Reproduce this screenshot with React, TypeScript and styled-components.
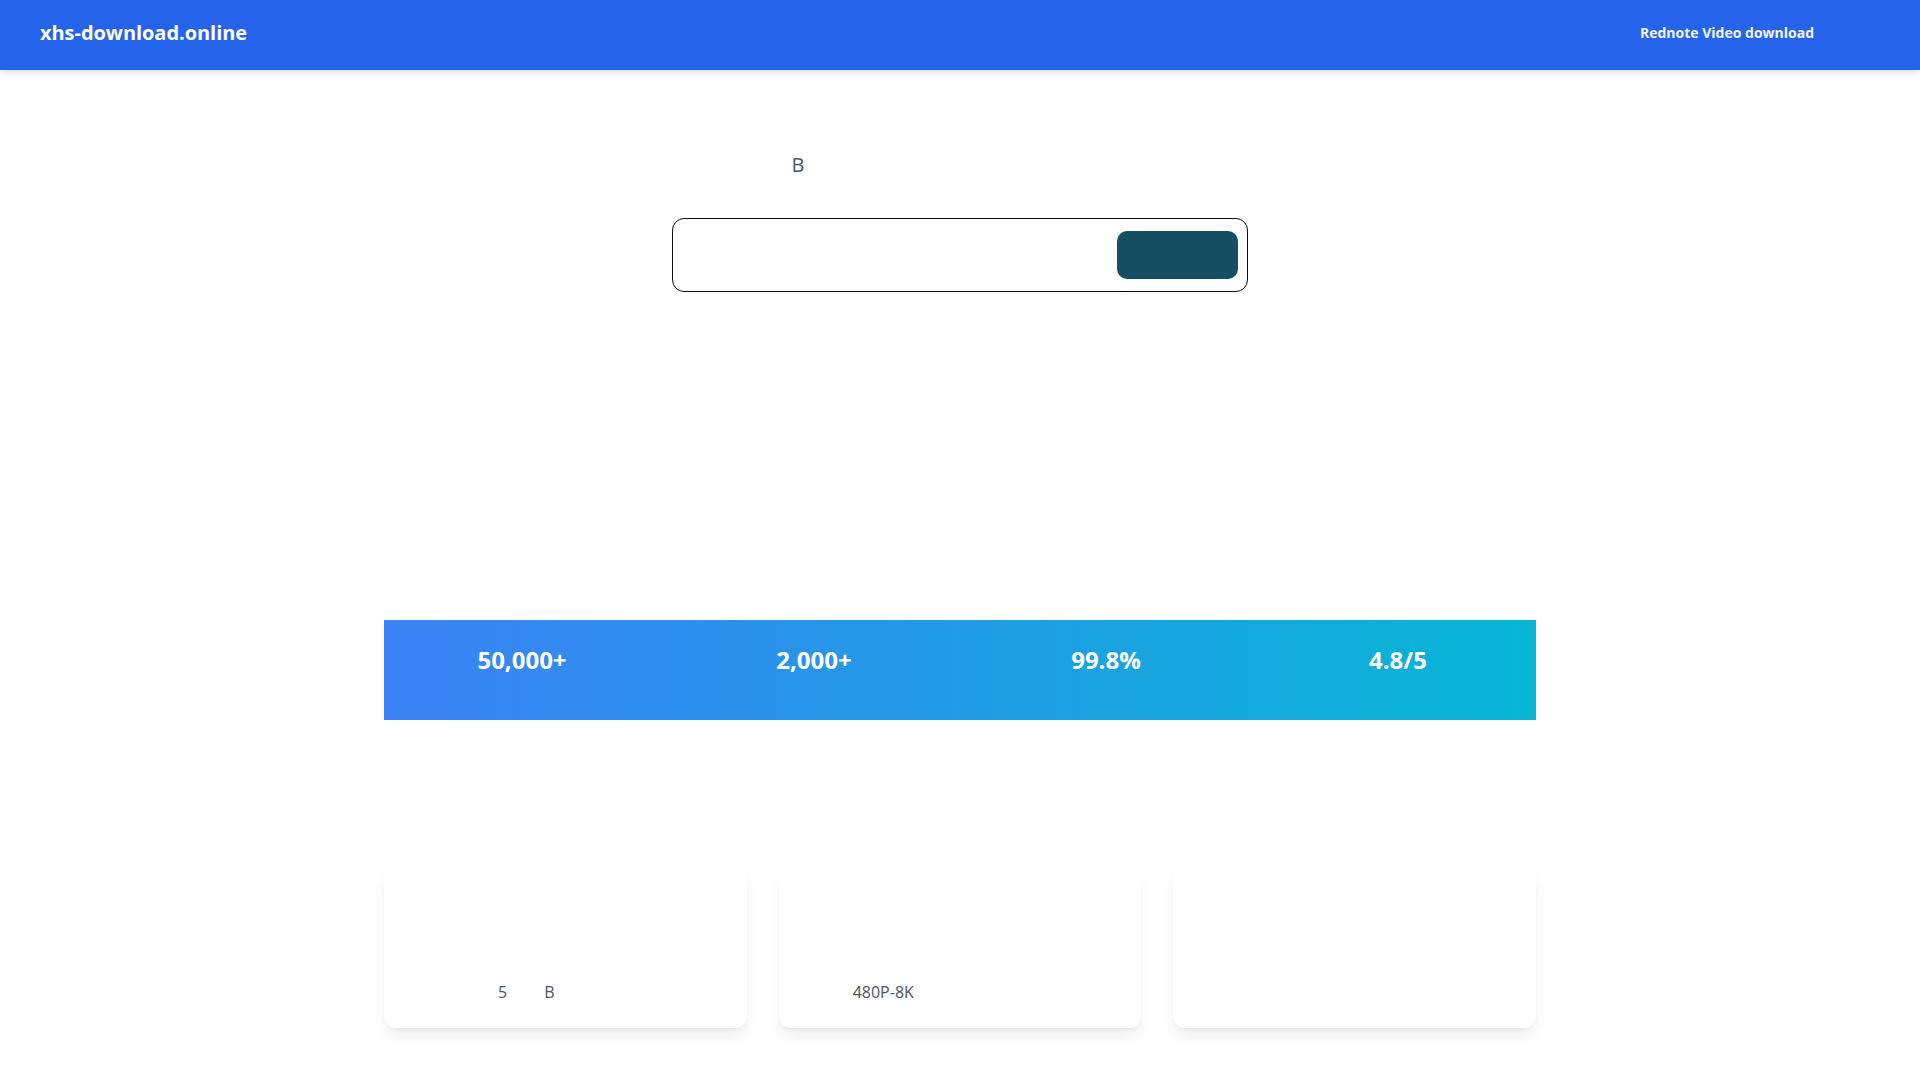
import React from 'react';
import styled, { createGlobalStyle } from 'styled-components';

const GlobalStyle = createGlobalStyle`
  html, body {
    margin: 0;
    padding: 0;
    background: #ffffff;
    font-family: 'Open Sans', 'Noto Sans', 'Noto Sans CJK SC', sans-serif;
    color: #1f2937;
  }
  * {
    box-sizing: border-box;
  }
`;

const Header = styled.header`
  height: 70px;
  padding: 0 40px 5px;
  display: flex;
  align-items: center;
  justify-content: space-between;
  background-color: #2563eb;
  box-shadow: 0 2px 6px rgba(0, 0, 0, 0.14);
  position: relative;
  z-index: 1;
`;

const Logo = styled.a`
  color: #ffffff;
  font-size: 20px;
  font-weight: 700;
  text-decoration: none;
  letter-spacing: -0.05px;
`;

const Nav = styled.nav`
  display: flex;
  align-items: center;
  gap: 24px;
  padding-right: 66px;
`;

const NavLink = styled.a`
  color: #f3f6ff;
  font-size: 14px;
  font-weight: 700;
  text-decoration: none;
`;

const Hero = styled.section`
  padding-top: 81px;
  display: flex;
  flex-direction: column;
  align-items: center;
`;

const Subtitle = styled.p`
  margin: 0;
  font-size: 20px;
  line-height: 28px;
  color: #4b5563;
  text-align: center;
`;

const Gap = styled.span<{ $before?: number; $after?: number }>`
  padding-left: ${(p) => p.$before ?? 0}px;
  padding-right: ${(p) => p.$after ?? 0}px;
`;

const SearchForm = styled.form`
  width: 576px;
  margin-top: 39px;
  display: flex;
  align-items: center;
  gap: 12px;
  padding: 12px 9px 12px 16px;
  border: 1px solid #0b0f17;
  border-radius: 12px;
  background: #ffffff;
`;

const UrlInput = styled.input`
  flex: 1;
  height: 48px;
  border: none;
  outline: none;
  background: transparent;
  font-family: inherit;
  font-size: 16px;
  color: #111827;
`;

const SubmitButton = styled.button`
  width: 121px;
  height: 48px;
  border: none;
  border-radius: 10px;
  background-color: #164e63;
  color: #ffffff;
  font-family: inherit;
  font-size: 16px;
  font-weight: 600;
  cursor: pointer;
`;

const Container = styled.div`
  max-width: 1152px;
  margin: 0 auto;
`;

const StatsBar = styled.section`
  margin-top: 328px;
  display: grid;
  grid-template-columns: repeat(4, 1fr);
  gap: 16px;
  padding: 24px 0 44px;
  background: linear-gradient(90deg, #3b82f6 0%, #06b6d4 100%);
  color: #ffffff;
  text-align: center;
`;

const StatValue = styled.div`
  font-size: 24px;
  line-height: 32px;
  font-weight: 700;
`;

const FeatureGrid = styled.section`
  margin-top: 145px;
  display: grid;
  grid-template-columns: repeat(3, 1fr);
  column-gap: 32px;
  row-gap: 40px;
  padding-bottom: 40px;
`;

const FeatureCard = styled.div`
  min-height: 163px;
  padding: 24px;
  display: flex;
  flex-direction: column;
  justify-content: flex-end;
  background: #ffffff;
  border-radius: 12px;
  box-shadow: 0 10px 15px -3px rgba(0, 0, 0, 0.08), 0 4px 6px -4px rgba(0, 0, 0, 0.08);
`;

const FeatureText = styled.p`
  margin: 0;
  min-height: 24px;
  font-size: 16px;
  line-height: 24px;
  color: #4b5563;
`;

const stats = ['50,000+', '2,000+', '99.8%', '4.8/5'];

export default function App() {
  return (
    <>
      <GlobalStyle />
      <Header>
        <Logo href="#">xhs-download.online</Logo>
        <Nav>
          <NavLink href="#">Rednote Video download</NavLink>
        </Nav>
      </Header>

      <Hero>
        <Subtitle>
          <Gap $after={324}>B</Gap>
        </Subtitle>
        <SearchForm onSubmit={(e) => e.preventDefault()}>
          <UrlInput type="text" />
          <SubmitButton type="submit" />
        </SearchForm>
      </Hero>

      <Container>
        <StatsBar>
          {stats.map((value) => (
            <StatValue key={value}>{value}</StatValue>
          ))}
        </StatsBar>

        <FeatureGrid>
          <FeatureCard>
            <FeatureText>
              <Gap $before={90}>5</Gap>
              <Gap $before={37}>B</Gap>
            </FeatureText>
          </FeatureCard>
          <FeatureCard>
            <FeatureText>
              <Gap $before={50}>480P-8K</Gap>
            </FeatureText>
          </FeatureCard>
          <FeatureCard>
            <FeatureText />
          </FeatureCard>
          <FeatureCard>
            <FeatureText />
          </FeatureCard>
          <FeatureCard>
            <FeatureText />
          </FeatureCard>
          <FeatureCard>
            <FeatureText />
          </FeatureCard>
        </FeatureGrid>
      </Container>
    </>
  );
}
